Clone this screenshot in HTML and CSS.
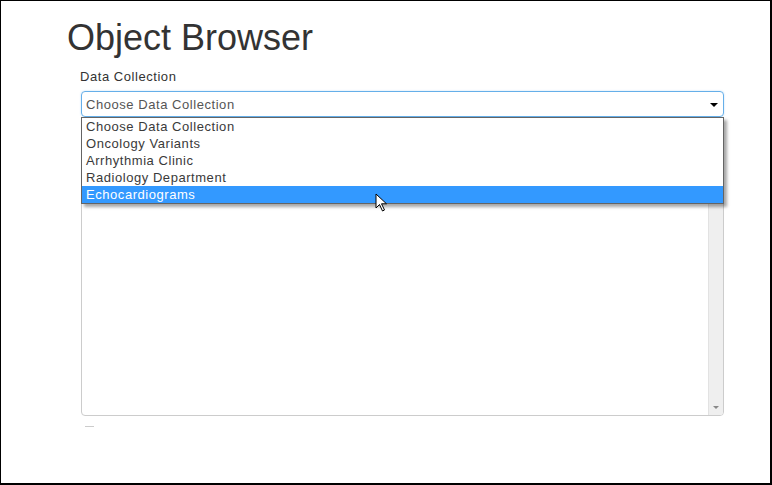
FILE: index.html
```html
<!DOCTYPE html>
<html>
<head>
<meta charset="utf-8">
<link rel="stylesheet" href="styles.css">
</head>
<body>
<div class="frame">
  <h1 class="title">Object Browser</h1>
  <div class="form">
    <label class="label">Data Collection</label>
    <div class="select-wrap">
      <div class="select">
        <span>Choose Data Collection</span>
        <span class="caret"></span>
      </div>
      <ul class="dropdown">
        <li>Choose Data Collection</li>
        <li>Oncology Variants</li>
        <li>Arrhythmia Clinic</li>
        <li>Radiology Department</li>
        <li class="selected">Echocardiograms</li>
      </ul>
      <svg class="cursor" width="14" height="20" viewBox="0 0 14 20">
        <path d="M1 1 L1 15 L4.5 11.5 L7.5 18 L9.5 17 L6.5 10.8 L11.5 10.8 Z" fill="#fff" stroke="#000" stroke-width="1" stroke-linejoin="miter"/>
      </svg>
    </div>
    <div class="listbox">
      <div class="list-area"></div>
      <div class="scrollbar">
        <span class="sb-arrow"></span>
      </div>
    </div>
    <div class="dash"></div>
  </div>
</div>
</body>
</html>
```

FILE: styles.css
```css
* { box-sizing: border-box; }
html, body { margin: 0; padding: 0; background: #fff; }
body { font-family: "Liberation Sans", Arial, sans-serif; color: #333; }
.frame {
  width: 772px;
  height: 485px;
  border-top: 1px solid #000;
  border-left: 1px solid #000;
  border-right: 2px solid #000;
  border-bottom: 2px solid #000;
  overflow: hidden;
  position: relative;
}
.title {
  margin: 15px 0 0 66px;
  font-size: 36px;
  font-weight: normal;
  line-height: 44px;
  color: #333;
}
.form {
  margin: 9px 0 0 80px;
  width: 643px;
}
.label {
  display: block;
  font-size: 13px;
  line-height: 16px;
  margin-left: -1px;
  letter-spacing: 0.55px;
  color: #333;
}
.select-wrap {
  position: relative;
  margin-top: 6px;
}
.select {
  height: 26px;
  border: 1px solid #66afe9;
  border-radius: 4px;
  display: flex;
  align-items: center;
  justify-content: space-between;
  padding: 0 5px 0 4px;
  font-size: 13px;
  letter-spacing: 0.55px;
  color: #555;
  box-shadow: 0 0 2px rgba(102,175,233,0.4);
}
.caret {
  width: 0;
  height: 0;
  border-left: 4px solid transparent;
  border-right: 4px solid transparent;
  border-top: 4px solid #000;
  margin-top: 1px;
}
.dropdown {
  position: absolute;
  left: 0;
  top: 26px;
  width: 643px;
  margin: 0;
  padding: 0;
  list-style: none;
  background: #fff;
  border: 1px solid #646464;
  box-shadow: 3px 3px 3px rgba(0,0,0,0.35);
  z-index: 2;
}
.dropdown li {
  height: 17px;
  line-height: 17px;
  font-size: 13px;
  letter-spacing: 0.55px;
  padding-left: 4px;
  color: #3a3a3a;
}
.dropdown li.selected {
  background: #3399ff;
  color: #fff;
}
.cursor {
  position: absolute;
  left: 294px;
  top: 102px;
  z-index: 3;
}
.listbox {
  margin-top: 1px;
  height: 298px;
  border: 1px solid #ccc;
  border-radius: 4px;
  display: flex;
  overflow: hidden;
}
.list-area { flex: 1; }
.scrollbar {
  width: 15px;
  background: #efefef;
  border-left: 1px solid #e2e2e2;
  display: flex;
  align-items: flex-end;
  justify-content: center;
  padding-bottom: 6px;
}
.sb-arrow {
  width: 0;
  height: 0;
  border-left: 3px solid transparent;
  border-right: 3px solid transparent;
  border-top: 3px solid #888;
}
.dash {
  width: 9px;
  height: 1px;
  background: #ccc;
  margin: 10px 0 0 4px;
}
```
